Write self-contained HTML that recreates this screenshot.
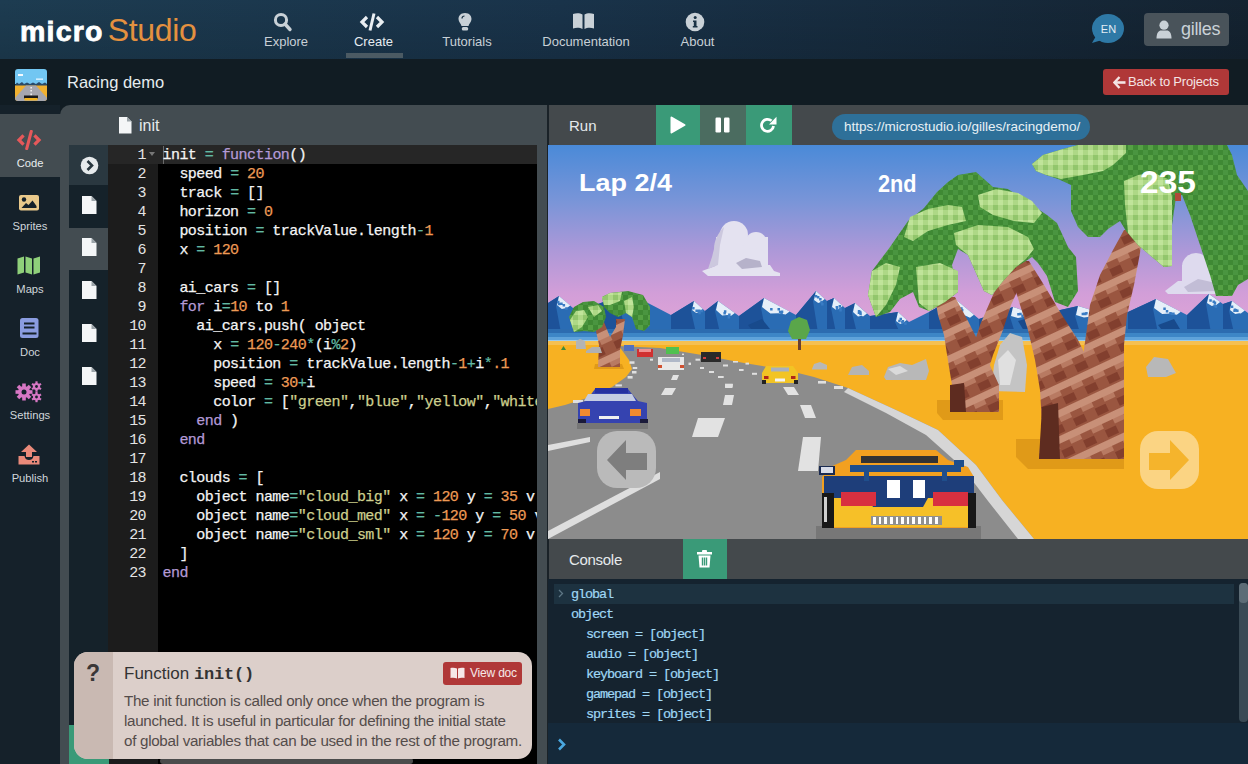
<!DOCTYPE html>
<html><head><meta charset="utf-8">
<style>
*{margin:0;padding:0;box-sizing:border-box}
html,body{width:1248px;height:764px;overflow:hidden;background:#111c23;font-family:"Liberation Sans",sans-serif}
.a{position:absolute}
#hdr{left:0;top:0;width:1248px;height:59px;background:linear-gradient(rgba(0,0,0,0),rgba(0,0,0,0.12)),linear-gradient(to right,#1d3c51,#19334a 45%,#142331)}
.logo{left:20px;top:12px;font-size:32px;color:#fff;white-space:nowrap;letter-spacing:0px}
.logo b{font-weight:bold;font-size:28.5px;letter-spacing:1.2px;-webkit-text-stroke:0.8px #fff}
.logo span{color:#e4913f;letter-spacing:-0.3px;margin-left:4px;font-weight:normal}
.nav{top:34px;font-size:13px;color:#c8d0d6;white-space:nowrap}
#bar{left:0;top:59px;width:1248px;height:46px;background:#111c23}
#side{left:0;top:105px;width:60px;height:659px;background:#15212a}
.sb{left:0;width:60px;text-align:center;font-size:11.2px;color:#d0d6da;margin-top:1px}
#panel{left:60px;top:105px;width:1188px;height:659px;background:#434c51;border-top-left-radius:10px}
.mono{font-family:"Liberation Mono",monospace}
#code{left:158px;top:145px;width:379px;height:619px;background:#000;overflow:hidden}
#gut{left:108px;top:145px;width:50px;height:619px;background:#1c1c1c}
#files{left:69px;top:145px;width:40px;height:619px;background:#15222a}
.ln{position:absolute;left:0;width:38px;text-align:right;font-size:15px;letter-spacing:-0.6px;color:#e4e4e4;line-height:19px;margin-top:0.5px}
.cl{position:absolute;left:4.5px;font-size:15px;letter-spacing:-0.55px;color:#f4f4f4;-webkit-text-stroke:0.25px currentColor;line-height:19px;white-space:pre;margin-top:0.5px}
.o{color:#ee9a55}.e{color:#62b9a3}.k{color:#b49ad6}.s{color:#cdcf8e}
#runp{left:549px;top:105px;width:699px;height:659px;background:#44494c}
#game{left:548px;top:145px;width:700px;height:394px;overflow:hidden;background:#5a90d8}
#cons{left:548px;top:579px;width:700px;height:185px;background:#15232f}
.cline{position:absolute;font-size:13.5px;letter-spacing:-1.1px;color:#9fd7f4;-webkit-text-stroke:0.2px currentColor;white-space:pre;font-family:"Liberation Mono",monospace}
</style></head><body>
<div id="hdr" class="a"></div>
<div class="a logo"><b>micro</b><span>Studio</span></div>
<!-- nav icons -->
<svg class="a" style="left:272px;top:12px" width="22" height="20" viewBox="0 0 22 20"><circle cx="9" cy="8" r="5.6" fill="none" stroke="#c9d1d7" stroke-width="3"/><line x1="13" y1="12" x2="18" y2="17.5" stroke="#c9d1d7" stroke-width="3.4" stroke-linecap="round"/></svg>
<div class="a nav" style="left:264px;width:42px;text-align:center">Explore</div>
<svg class="a" style="left:359px;top:12px" width="26" height="20" viewBox="0 0 26 20"><path d="M8 5 L3 10 L8 15" fill="none" stroke="#e9eef2" stroke-width="3.2"/><path d="M18 5 L23 10 L18 15" fill="none" stroke="#e9eef2" stroke-width="3.2"/><line x1="15" y1="1.5" x2="11" y2="18.5" stroke="#e9eef2" stroke-width="3"/></svg>
<div class="a nav" style="left:350px;width:47px;text-align:center;color:#e6ecf0">Create</div>
<div class="a" style="left:346px;top:53px;width:57px;height:5px;background:#4b5a63"></div>
<svg class="a" style="left:457px;top:12px" width="16" height="20" viewBox="0 0 16 20"><path d="M8 1 C3.5 1 1.5 4 1.5 7 C1.5 10 4 11.5 4.5 14 L11.5 14 C12 11.5 14.5 10 14.5 7 C14.5 4 12.5 1 8 1Z" fill="#c9d1d7"/><rect x="4.8" y="15" width="6.4" height="3.5" rx="1.5" fill="#c9d1d7"/><path d="M5 6.5 C5 5 6 4 7.5 4" stroke="#1a3244" stroke-width="1.2" fill="none"/></svg>
<div class="a nav" style="left:440px;width:54px;text-align:center">Tutorials</div>
<svg class="a" style="left:572px;top:12px" width="23" height="18" viewBox="0 0 23 18"><path d="M1 2 C4 1 8 1 10.5 2.5 L10.5 17 C8 15.5 4 15.5 1 16.5Z" fill="#c9d1d7"/><path d="M22 2 C19 1 15 1 12.5 2.5 L12.5 17 C15 15.5 19 15.5 22 16.5Z" fill="#c9d1d7"/></svg>
<div class="a nav" style="left:540px;width:92px;text-align:center">Documentation</div>
<svg class="a" style="left:685px;top:12px" width="20" height="20" viewBox="0 0 20 20"><circle cx="10" cy="10" r="9.3" fill="#c9d1d7"/><circle cx="10.2" cy="5.6" r="1.5" fill="#1a3244"/><path d="M8 8.5 L11.5 8.5 L11.5 14 L12.5 14 L12.5 15.5 L7.8 15.5 L7.8 14 L8.8 14 L8.8 10 L8 10Z" fill="#1a3244"/></svg>
<div class="a nav" style="left:678px;width:39px;text-align:center">About</div>
<!-- EN bubble -->
<svg class="a" style="left:1088px;top:12px" width="40" height="34" viewBox="0 0 40 34"><ellipse cx="20" cy="16.5" rx="16" ry="14.5" fill="#2e79a6"/><path d="M8 24 L4 31 L14 28Z" fill="#2e79a6"/><text x="20.5" y="21" font-family="Liberation Sans" font-size="11" fill="#e4eef5" text-anchor="middle">EN</text></svg>
<div class="a" style="left:1144px;top:13px;width:85px;height:33px;background:#49535a;border-radius:4px"></div>
<svg class="a" style="left:1155px;top:20px" width="18" height="19" viewBox="0 0 18 19"><circle cx="9" cy="5.2" r="4.6" fill="#c9d1d7"/><path d="M1.5 18.5 C1.5 12.5 4 10.5 6 10.5 L12 10.5 C14 10.5 16.5 12.5 16.5 18.5Z" fill="#c9d1d7"/></svg>
<div class="a" style="left:1181px;top:19px;font-size:18px;color:#c9d1d7;letter-spacing:-0.3px">gilles</div>
<div id="bar" class="a"></div>
<!-- project bar -->
<svg class="a" style="left:15px;top:69px" width="32" height="32" viewBox="0 0 32 32"><defs><clipPath id="tc"><rect width="32" height="32" rx="3"/></clipPath></defs><g clip-path="url(#tc)"><rect width="32" height="15" fill="#72c6f2"/><rect x="3" y="5" width="5" height="2" fill="#f4faff"/><rect x="21" y="9.5" width="7" height="1.3" fill="#e8f6ff"/><path d="M0 16 L2 13.5 L4 15 L7 13 L9 15 L12 13.5 L15 15 L18 13.5 L21 15 L24 13 L27 15 L30 13.5 L32 15 L32 17 L0 17Z" fill="#2a4a68"/><rect y="16.5" width="32" height="15.5" fill="#f0b030"/><path d="M11 16.5 L21 16.5 L32 29 L32 32 L0 32 L0 29Z" fill="#a6a6ae"/><rect x="15.5" y="18" width="1.3" height="1.5" fill="#fff"/><rect x="15.5" y="21" width="1.3" height="1.5" fill="#fff"/><rect x="15.5" y="24.5" width="1.3" height="2" fill="#fff"/><rect x="9" y="26.5" width="14" height="3" fill="#1a1a1a"/><rect x="9.5" y="29" width="13" height="2.5" fill="#f2b21e"/></g></svg>
<div class="a" style="left:67px;top:73px;font-size:16.5px;color:#e6ecef">Racing demo</div>
<div class="a" style="left:1103px;top:69px;width:126px;height:26px;background:#b03838;border-radius:3px"></div>
<svg class="a" style="left:1113px;top:76px" width="13" height="13" viewBox="0 0 13 13"><path d="M6.5 1 L1.5 6.5 L6.5 12" fill="none" stroke="#f4e4e4" stroke-width="2.4"/><line x1="2" y1="6.5" x2="12.5" y2="6.5" stroke="#f4e4e4" stroke-width="2.6"/></svg>
<div class="a" style="left:1128px;top:74px;font-size:13px;color:#f4e4e4;letter-spacing:-0.2px">Back to Projects</div>
<div id="side" class="a"></div>
<div id="panel" class="a"></div>
<div class="a" style="left:0;top:114px;width:62px;height:63px;background:#434c51"></div>
<!-- sidebar icons -->
<svg class="a" style="left:16px;top:130px" width="26" height="20" viewBox="0 0 28 22"><path d="M8 6 L3 11 L8 16" fill="none" stroke="#e6585a" stroke-width="3.6"/><path d="M20 6 L25 11 L20 16" fill="none" stroke="#e6585a" stroke-width="3.6"/><line x1="16.5" y1="1.5" x2="11.5" y2="20.5" stroke="#e6585a" stroke-width="3.4" stroke-linecap="round"/></svg>
<div class="a sb" style="top:156px;color:#e8ecee">Code</div>
<svg class="a" style="left:19px;top:195px" width="20" height="16" viewBox="0 0 20 16"><rect x="0" y="0" width="20" height="15.5" rx="2" fill="#e9c98b"/><circle cx="5" cy="4.5" r="2.2" fill="#15212a"/><path d="M2.5 13 L7 8 L9.5 10 L13.5 5.5 L17.5 11 L17.5 13Z" fill="#15212a"/></svg>
<div class="a sb" style="top:219px">Sprites</div>
<svg class="a" style="left:17px;top:256px" width="24" height="19" viewBox="0 0 24 19"><path d="M0.5 2.5 L7 0.5 L7 16.5 L0.5 18.5Z" fill="#8fd07a"/><path d="M8.5 0.5 L15 2.5 L15 18.5 L8.5 16.5Z" fill="#8fd07a"/><path d="M16.5 2.5 L23 0.5 L23 16.5 L16.5 18.5Z" fill="#8fd07a"/></svg>
<div class="a sb" style="top:282px">Maps</div>
<svg class="a" style="left:20px;top:318px" width="19" height="20" viewBox="0 0 19 20"><rect x="0" y="0" width="18.5" height="20" rx="2.5" fill="#8a9ce0"/><rect x="4" y="4.5" width="10.5" height="2" fill="#15212a"/><rect x="4" y="8.5" width="10.5" height="2" fill="#15212a"/><rect x="2.5" y="14.5" width="14" height="2" fill="#15212a"/></svg>
<div class="a sb" style="top:345px">Doc</div>
<svg class="a" style="left:15px;top:381px" width="28" height="22" viewBox="0 0 28 22">
<g fill="#d777c4"><circle cx="9" cy="11" r="6"/><g transform="translate(9 11)"><rect x="-1.8" y="-8.5" width="3.6" height="17"/><rect x="-1.8" y="-8.5" width="3.6" height="17" transform="rotate(45)"/><rect x="-1.8" y="-8.5" width="3.6" height="17" transform="rotate(90)"/><rect x="-1.8" y="-8.5" width="3.6" height="17" transform="rotate(135)"/></g>
<circle cx="21.5" cy="5.5" r="3.6"/><g transform="translate(21.5 5.5)"><rect x="-1.1" y="-5.2" width="2.2" height="10.4"/><rect x="-1.1" y="-5.2" width="2.2" height="10.4" transform="rotate(60)"/><rect x="-1.1" y="-5.2" width="2.2" height="10.4" transform="rotate(120)"/></g>
<circle cx="21.5" cy="16" r="3.6"/><g transform="translate(21.5 16)"><rect x="-1.1" y="-5.2" width="2.2" height="10.4"/><rect x="-1.1" y="-5.2" width="2.2" height="10.4" transform="rotate(60)"/><rect x="-1.1" y="-5.2" width="2.2" height="10.4" transform="rotate(120)"/></g></g>
<circle cx="9" cy="11" r="2.5" fill="#15212a"/><circle cx="21.5" cy="5.5" r="1.4" fill="#15212a"/><circle cx="21.5" cy="16" r="1.4" fill="#15212a"/></svg>
<div class="a sb" style="top:408px">Settings</div>
<svg class="a" style="left:18px;top:444px" width="22" height="21" viewBox="0 0 22 21"><path d="M11 0.5 L19 8 L14 8 L14 13 L8 13 L8 8 L3 8Z" fill="#ea8a7a"/><path d="M0.5 12 L6.5 12 C7 15 9 16 11 16 C13 16 15 15 15.5 12 L21.5 12 L21.5 20.5 L0.5 20.5Z" fill="#ea8a7a"/><rect x="14" y="17" width="2" height="1.5" fill="#15212a"/><rect x="17" y="17" width="2" height="1.5" fill="#15212a"/></svg>
<div class="a sb" style="top:471px">Publish</div>
<div id="files" class="a"></div>
<div class="a" style="left:69px;top:145px;width:40px;height:40px;background:#2a3840"></div>
<div class="a" style="left:69px;top:228px;width:40px;height:42px;background:#434c51"></div>
<div id="gut" class="a"></div>
<div class="a" style="left:108px;top:145px;width:429px;height:19px;background:#262626"></div>
<div id="code" class="a"></div>
<div class="a" style="left:158px;top:145px;width:379px;height:19px;background:#262626"></div>
<div class="a" style="left:163px;top:146px;width:1px;height:18px;background:#6a6a6a"></div>
<div class="a mono" style="left:108px;top:145px;width:50px;height:619px">
<div class="ln" style="top:0px">1</div>
<div class="ln" style="top:19px">2</div>
<div class="ln" style="top:38px">3</div>
<div class="ln" style="top:57px">4</div>
<div class="ln" style="top:76px">5</div>
<div class="ln" style="top:95px">6</div>
<div class="ln" style="top:114px">7</div>
<div class="ln" style="top:133px">8</div>
<div class="ln" style="top:152px">9</div>
<div class="ln" style="top:171px">10</div>
<div class="ln" style="top:190px">11</div>
<div class="ln" style="top:209px">12</div>
<div class="ln" style="top:228px">13</div>
<div class="ln" style="top:247px">14</div>
<div class="ln" style="top:266px">15</div>
<div class="ln" style="top:285px">16</div>
<div class="ln" style="top:304px">17</div>
<div class="ln" style="top:323px">18</div>
<div class="ln" style="top:342px">19</div>
<div class="ln" style="top:361px">20</div>
<div class="ln" style="top:380px">21</div>
<div class="ln" style="top:399px">22</div>
<div class="ln" style="top:418px">23</div>
</div>
<div class="a mono" style="left:158px;top:145px;width:379px;height:619px;overflow:hidden">
<div class="cl" style="top:0px"><span>init</span> <span class="e">=</span> <span class="k">function</span>()</div>
<div class="cl" style="top:19px">  speed <span class="e">=</span> <span class="o">20</span></div>
<div class="cl" style="top:38px">  track <span class="e">=</span> []</div>
<div class="cl" style="top:57px">  horizon <span class="e">=</span> <span class="o">0</span></div>
<div class="cl" style="top:76px">  position <span class="e">=</span> trackValue.length<span class="e">-</span><span class="o">1</span></div>
<div class="cl" style="top:95px">  x <span class="e">=</span> <span class="o">120</span></div>
<div class="cl" style="top:114px"></div>
<div class="cl" style="top:133px">  ai_cars <span class="e">=</span> []</div>
<div class="cl" style="top:152px">  <span class="k">for</span> i<span class="e">=</span><span class="o">10</span> to <span class="o">1</span></div>
<div class="cl" style="top:171px">    ai_cars.push( object</div>
<div class="cl" style="top:190px">      x <span class="e">=</span> <span class="o">120</span><span class="e">-</span><span class="o">240</span><span class="e">*</span>(i<span class="e">%</span><span class="o">2</span>)</div>
<div class="cl" style="top:209px">      position <span class="e">=</span> trackValue.length<span class="e">-</span><span class="o">1</span><span class="e">+</span>i<span class="e">*</span><span class="o">.1</span></div>
<div class="cl" style="top:228px">      speed <span class="e">=</span> <span class="o">30</span><span class="e">+</span>i</div>
<div class="cl" style="top:247px">      color <span class="e">=</span> [<span class="s">"green"</span>,<span class="s">"blue"</span>,<span class="s">"yellow"</span>,<span class="s">"white"</span>,<span class="s">"red"</span>][i%5]</div>
<div class="cl" style="top:266px">    <span class="k">end</span> )</div>
<div class="cl" style="top:285px">  <span class="k">end</span></div>
<div class="cl" style="top:304px"></div>
<div class="cl" style="top:323px">  clouds <span class="e">=</span> [</div>
<div class="cl" style="top:342px">    object name<span class="e">=</span><span class="s">"cloud_big"</span> x <span class="e">=</span> <span class="o">120</span> y <span class="e">=</span> <span class="o">35</span> v</div>
<div class="cl" style="top:361px">    object name<span class="e">=</span><span class="s">"cloud_med"</span> x <span class="e">=</span> <span class="e">-</span><span class="o">120</span> y <span class="e">=</span> <span class="o">50</span> vx</div>
<div class="cl" style="top:380px">    object name<span class="e">=</span><span class="s">"cloud_sml"</span> x <span class="e">=</span> <span class="o">120</span> y <span class="e">=</span> <span class="o">70</span> v</div>
<div class="cl" style="top:399px">  ]</div>
<div class="cl" style="top:418px"><span class="k">end</span></div>
</div><svg class="a" style="left:119px;top:117px" width="13" height="17" viewBox="0 0 13 17"><path d="M0 0 L8 0 L12.5 4.5 L12.5 16.5 L0 16.5Z" fill="#f4f6f7"/><path d="M8 0 L8 4.5 L12.5 4.5" fill="#9aa3a8"/></svg>
<div class="a" style="left:139px;top:117px;font-size:16px;color:#e6eaec">init</div>
<svg class="a" style="left:80px;top:156px" width="19" height="19" viewBox="0 0 19 19"><circle cx="9.5" cy="9.5" r="8.8" fill="#e6eaec"/><path d="M7.5 5 L12 9.5 L7.5 14" fill="none" stroke="#28363e" stroke-width="2.6"/></svg>
<svg class="a" style="left:82px;top:196px" width="15" height="18" viewBox="0 0 15 18"><path d="M0 0 L9.5 0 L14.5 5 L14.5 18 L0 18Z" fill="#f4f6f7"/><path d="M9.5 0 L9.5 5 L14.5 5" fill="#9aa3a8"/></svg>
<svg class="a" style="left:82px;top:238px" width="15" height="18" viewBox="0 0 15 18"><path d="M0 0 L9.5 0 L14.5 5 L14.5 18 L0 18Z" fill="#f4f6f7"/><path d="M9.5 0 L9.5 5 L14.5 5" fill="#9aa3a8"/></svg>
<svg class="a" style="left:82px;top:281px" width="15" height="18" viewBox="0 0 15 18"><path d="M0 0 L9.5 0 L14.5 5 L14.5 18 L0 18Z" fill="#f4f6f7"/><path d="M9.5 0 L9.5 5 L14.5 5" fill="#9aa3a8"/></svg>
<svg class="a" style="left:82px;top:324px" width="15" height="18" viewBox="0 0 15 18"><path d="M0 0 L9.5 0 L14.5 5 L14.5 18 L0 18Z" fill="#f4f6f7"/><path d="M9.5 0 L9.5 5 L14.5 5" fill="#9aa3a8"/></svg>
<svg class="a" style="left:82px;top:367px" width="15" height="18" viewBox="0 0 15 18"><path d="M0 0 L9.5 0 L14.5 5 L14.5 18 L0 18Z" fill="#f4f6f7"/><path d="M9.5 0 L9.5 5 L14.5 5" fill="#9aa3a8"/></svg>
<svg class="a" style="left:149px;top:152px" width="7" height="5" viewBox="0 0 7 5"><path d="M0 0 L6 0 L3 4Z" fill="#777"/></svg>
<div class="a" style="left:69px;top:725px;width:40px;height:39px;background:#3a9a78"></div>
<!-- run panel -->
<div id="runp" class="a"></div>
<div class="a" style="left:547px;top:105px;width:2px;height:659px;background:#1a2228"></div>
<div class="a" style="left:569px;top:117px;font-size:15px;color:#e6eaec">Run</div>
<!--GAME-->
<svg class="a" style="left:548px;top:145px" width="700" height="394" viewBox="0 0 700 394">
<defs>
<linearGradient id="sky" x1="0" y1="0" x2="0" y2="190" gradientUnits="userSpaceOnUse"><stop offset="0" stop-color="#4a8ad8"/><stop offset="0.3" stop-color="#7a95d8"/><stop offset="0.55" stop-color="#ac98d8"/><stop offset="0.78" stop-color="#d29ed8"/><stop offset="1" stop-color="#e2a6d6"/></linearGradient>
<linearGradient id="wat" x1="0" y1="0" x2="0" y2="1">
<stop offset="0" stop-color="#2f78c0"/><stop offset="0.6" stop-color="#4d9ad5"/><stop offset="1" stop-color="#a8d8ee"/>
</linearGradient>
<pattern id="pd" width="10" height="10" patternUnits="userSpaceOnUse"><rect width="10" height="10" fill="#3f8934"/><rect x="0" y="0" width="5" height="5" fill="#55a044"/><rect x="5" y="5" width="5" height="5" fill="#4a9540"/></pattern>
<pattern id="pl" width="10" height="10" patternUnits="userSpaceOnUse"><rect width="10" height="10" fill="#aed886"/><rect x="5" y="0" width="5" height="5" fill="#92c66c"/><rect x="0" y="5" width="5" height="5" fill="#c0e49a"/></pattern>
<pattern id="pt" width="24" height="24" patternUnits="userSpaceOnUse" patternTransform="rotate(-25)"><rect width="24" height="24" fill="#9a5640"/><rect x="0" y="0" width="24" height="7" fill="#c89078"/><rect x="12" y="7" width="12" height="5" fill="#b87a62"/><rect x="0" y="14" width="12" height="8" fill="#823f2e"/></pattern>
</defs>
<rect width="700" height="200" fill="url(#sky)"/>
<!-- cloud big -->
<g fill="#e4e2f0"><rect x="168" y="92" width="52" height="34"/><circle cx="186" cy="90" r="14"/><circle cx="208" cy="98" r="11"/><circle cx="180" cy="112" r="15"/><circle cx="206" cy="116" r="13"/><path d="M154 126 L170 120 L222 120 L226 126 L232 128 L232 131 L160 131Z"/></g>
<path d="M188 118 L198 113 L212 116 L214 122 L194 124Z" fill="#b6b2ca"/>
<path d="M166 104 C166 96 170 88 176 82 L172 100 L170 120 L160 124 L164 112Z" fill="#ccc8de"/>
<!-- cloud small right -->
<g fill="#dedaee"><rect x="634" y="120" width="36" height="20"/><circle cx="648" cy="122" r="14"/><circle cx="664" cy="130" r="11"/><path d="M617 146 L630 136 L676 136 L679 149 L620 149Z"/></g>
<path d="M636 142 L650 134 L668 138 L668 146 L640 147Z" fill="#c2bdd6"/>
<!-- mountains -->
<path d="M0 188 L0 158 L11 151 L25 163 L50 159 L75 150 L100 158 L123 170 L146 156 L157 166 L170 156 L191 171 L216 153 L248 170 L268 146 L279 156 L286 153 L297 163 L307 158 L322 171 L350 167 L361 177 L381 167 L406 153 L431 174 L465 162 L490 170 L530 161 L560 170 L580 167 L608 154 L639 170 L661 149 L675 159 L684 156 L700 168 L700 188 Z" fill="#2a6cb4"/>
<path d="M0 158 L11 151 L8 161 L13 188 L0 188Z M50 159 L75 150 L72 160 L77 188 L50 188Z M123 170 L146 156 L143 166 L148 188 L123 188Z M157 166 L170 156 L167 166 L172 188 L157 188Z M191 171 L216 153 L213 163 L218 188 L191 188Z M248 170 L268 146 L265 156 L270 188 L248 188Z M279 156 L286 153 L283 163 L288 188 L279 188Z M297 163 L307 158 L304 168 L309 188 L297 188Z M322 171 L350 167 L347 177 L352 188 L322 188Z M381 167 L406 153 L403 163 L408 188 L381 188Z M431 174 L465 162 L462 172 L467 188 L431 188Z M490 170 L530 161 L527 171 L532 188 L490 188Z M580 167 L608 154 L605 164 L610 188 L580 188Z M639 170 L661 149 L658 159 L663 188 L639 188Z M675 159 L684 156 L681 166 L686 188 L675 188Z" fill="#1d5299"/>
<path d="M11 151 L22.2 160.6 L18.2 163.6 L17.3 163.2 L13.8 164.0 L9 160Z M75 150 L95.0 156.4 L91.0 159.4 L86.2 159.8 L80.0 161.0 L73 159Z M146 156 L154.8 164.0 L150.8 167.0 L150.9 167.0 L148.2 168.0 L144 165Z M170 156 L186.8 168.0 L182.8 171.0 L179.4 170.0 L174.2 170.5 L168 165Z M216 153 L241.6 166.6 L237.6 169.6 L230.4 168.2 L222.4 168.5 L214 162Z M268 146 L276.8 154.0 L272.8 157.0 L272.9 157.0 L270.2 158.0 L266 155Z M286 153 L294.8 161.0 L290.8 164.0 L290.9 164.0 L288.2 165.0 L284 162Z M307 158 L319.0 168.4 L315.0 171.4 L313.8 170.8 L310.0 171.5 L305 167Z M350 167 L358.8 175.0 L354.8 178.0 L354.9 178.0 L352.2 179.0 L348 176Z M406 153 L426.0 169.8 L422.0 172.8 L417.2 170.6 L411.0 170.5 L404 162Z M465 162 L485.0 168.4 L481.0 171.4 L476.2 171.8 L470.0 173.0 L463 171Z M530 161 L554.0 168.2 L550.0 171.2 L543.5 171.4 L536.0 172.5 L528 170Z M608 154 L632.8 166.8 L628.8 169.8 L622.0 168.6 L614.2 169.0 L606 163Z M661 149 L672.2 157.0 L668.2 160.0 L667.3 160.0 L663.8 161.0 L659 158Z M684 156 L696.8 165.6 L692.8 168.6 L691.2 168.2 L687.2 169.0 L682 165Z" fill="#e6eff9"/>
<path d="M12.2 157.5h2.5v2.5h-2.5Z M14.6 159.0h2.5v2.5h-2.5Z M9.0 155.7h2.5v2.5h-2.5Z M9.9 157.8h2.5v2.5h-2.5Z M17.2 162.2h2.5v2.5h-2.5Z M77.6 156.5h2.5v2.5h-2.5Z M82.2 157.5h2.5v2.5h-2.5Z M75.8 155.3h2.5v2.5h-2.5Z M82.7 157.1h2.5v2.5h-2.5Z M81.7 157.9h2.5v2.5h-2.5Z M147.4 164.6h2.5v2.5h-2.5Z M150.3 166.7h2.5v2.5h-2.5Z M152.5 164.7h2.5v2.5h-2.5Z M144.1 162.0h2.5v2.5h-2.5Z M149.9 164.5h2.5v2.5h-2.5Z M175.9 165.2h2.5v2.5h-2.5Z M175.4 167.1h2.5v2.5h-2.5Z M179.6 170.9h2.5v2.5h-2.5Z M180.1 168.4h2.5v2.5h-2.5Z M179.8 169.9h2.5v2.5h-2.5Z M232.3 166.7h2.5v2.5h-2.5Z M229.5 163.1h2.5v2.5h-2.5Z M230.9 165.8h2.5v2.5h-2.5Z M232.8 165.5h2.5v2.5h-2.5Z M222.1 162.9h2.5v2.5h-2.5Z M266.8 149.9h2.5v2.5h-2.5Z M272.3 156.1h2.5v2.5h-2.5Z M273.1 157.9h2.5v2.5h-2.5Z M271.1 153.0h2.5v2.5h-2.5Z M268.9 150.9h2.5v2.5h-2.5Z M290.6 160.0h2.5v2.5h-2.5Z M291.3 164.1h2.5v2.5h-2.5Z M291.2 162.8h2.5v2.5h-2.5Z M287.6 161.1h2.5v2.5h-2.5Z M287.9 162.4h2.5v2.5h-2.5Z M311.3 167.7h2.5v2.5h-2.5Z M309.7 166.6h2.5v2.5h-2.5Z M310.8 165.7h2.5v2.5h-2.5Z M309.8 165.0h2.5v2.5h-2.5Z M311.2 166.5h2.5v2.5h-2.5Z M353.1 176.0h2.5v2.5h-2.5Z M350.2 174.7h2.5v2.5h-2.5Z M351.5 172.7h2.5v2.5h-2.5Z M356.2 177.2h2.5v2.5h-2.5Z M353.6 174.9h2.5v2.5h-2.5Z M412.2 163.5h2.5v2.5h-2.5Z M412.0 163.9h2.5v2.5h-2.5Z M407.3 160.7h2.5v2.5h-2.5Z M412.9 164.1h2.5v2.5h-2.5Z M412.1 162.2h2.5v2.5h-2.5Z M477.8 169.2h2.5v2.5h-2.5Z M469.2 168.0h2.5v2.5h-2.5Z M479.7 170.0h2.5v2.5h-2.5Z M473.3 169.4h2.5v2.5h-2.5Z M471.2 167.8h2.5v2.5h-2.5Z M533.6 167.8h2.5v2.5h-2.5Z M536.1 167.7h2.5v2.5h-2.5Z M541.1 168.6h2.5v2.5h-2.5Z M535.2 167.4h2.5v2.5h-2.5Z M537.2 166.9h2.5v2.5h-2.5Z M617.8 164.9h2.5v2.5h-2.5Z M615.3 162.6h2.5v2.5h-2.5Z M622.7 167.4h2.5v2.5h-2.5Z M624.2 167.4h2.5v2.5h-2.5Z M621.2 166.9h2.5v2.5h-2.5Z M665.7 156.4h2.5v2.5h-2.5Z M664.5 155.5h2.5v2.5h-2.5Z M661.3 154.2h2.5v2.5h-2.5Z M666.6 160.2h2.5v2.5h-2.5Z M665.5 159.2h2.5v2.5h-2.5Z M682.8 160.4h2.5v2.5h-2.5Z M685.7 163.4h2.5v2.5h-2.5Z M685.3 164.4h2.5v2.5h-2.5Z M688.1 164.6h2.5v2.5h-2.5Z M686.7 164.0h2.5v2.5h-2.5Z" fill="#3a7cc4"/>
<g fill="#184a8c"><path d="M30 178 L44 172 L50 182 L36 186Z"/><path d="M200 180 L214 174 L222 184 L206 188Z"/><path d="M470 176 L484 172 L490 182 L476 186Z"/><path d="M610 180 L626 174 L632 184 L616 188Z"/></g>
<rect y="184" width="700" height="4" fill="#2c6cb0"/><rect y="188" width="700" height="4" fill="#3d86c6"/><rect y="192" width="700" height="3" fill="#5fa3da"/><rect y="195" width="700" height="2" fill="#9ccdee"/>
<!-- sand -->
<rect y="196" width="700" height="198" fill="#f7b122"/>
<rect y="196" width="700" height="4" fill="#f6c050"/>
<!-- road -->
<path d="M0 264 L17 260 L42 252 L64 242 L78 232 L84 224 L81 215 L71 201 L112 203 L154 210 L196 218 L238 225 L266 232 L300 243 L348 265 L390 285 L428 320 L454 355 L486 394 L0 394Z" fill="#8c8c8c"/>
<!-- road edge lines -->
<path d="M300 243 L348 265 L390 285 L428 320 L454 355 L486 394 L470 394 L440 356 L414 322 L378 290 L338 268 L296 247Z" fill="#d6d6d6"/>
<path d="M0 386 L112 327 L112 334 L0 394Z" fill="#dedede"/>
<path d="M0 300 L42 292 L42 297 L0 306Z" fill="#dedede"/>
<!-- lane dashes -->
<g fill="#e0e0e0"><rect x="81.5" y="216.3" width="5" height="2.5"/><rect x="84.7" y="222" width="4.5" height="2"/><rect x="84" y="226" width="4.5" height="2.5"/><rect x="79.6" y="231" width="5" height="2.6"/><rect x="67.4" y="239.4" width="6.5" height="2"/><rect x="50" y="246" width="8" height="2.5"/><rect x="25" y="255" width="10" height="3"/><rect x="102" y="213.7" width="3" height="2"/><rect x="140.5" y="217.6" width="2.5" height="2.4"/><rect x="152" y="222" width="4" height="2"/><rect x="161" y="226" width="5" height="2"/><rect x="170" y="231" width="5.7" height="2"/><rect x="177" y="238.7" width="7.7" height="3.9"/><rect x="147.5" y="213.7" width="4.5" height="2"/><rect x="175" y="219.5" width="5" height="2"/><rect x="191" y="224" width="4.6" height="2"/><rect x="204" y="227.8" width="5" height="2"/><rect x="185" y="216" width="5" height="1.6"/><rect x="197.5" y="217.6" width="3.5" height="2"/><rect x="134" y="208.6" width="2" height="1.5"/><rect x="220" y="231" width="6" height="2.4"/><rect x="270" y="236" width="8" height="2.6"/><rect x="286" y="241" width="9" height="3"/></g>

<g fill="#e2e2e2">
<path d="M150 273 L177 273 L170 292 L144 292Z"/><path d="M255 292 L273 292 L270 326 L250 326Z"/><path d="M117 243 L128 243 L124 250 L113 250Z"/><path d="M252 260 L263 260 L268 273 L257 273Z"/><path d="M177 250 L186 250 L184 260 L175 260Z"/><path d="M235 242 L246 242 L251 250 L240 250Z"/><path d="M178 239 L185 239 L184 243 L177 243Z"/><path d="M125 230 L131 230 L129 235 L123 235Z"/>
</g>
<!-- left arrow -->
<rect x="49" y="286" width="59" height="57" rx="20" fill="#bababa"/><path d="M59 315 L78 295 L78 308 L99 308 L99 325 L78 325 L78 335Z" fill="#7e7e7e"/>
<!-- right arrow -->
<rect x="592" y="286" width="59" height="58" rx="18" fill="#fbd483"/><path d="M641 315 L622 295 L622 308 L601 308 L601 325 L622 325 L622 335Z" fill="#f5b42c"/>
<!-- left small palm -->
<path d="M47 219 L74 219 L76 224 L46 224Z" fill="#e09a18"/>
<path d="M46 177 L56 177 L62 192 L68 182 L68 174 L77 174 L75 190 L72 205 L72 222 L50 222 L51 200Z" fill="url(#pt)"/>
<path d="M21 172 L26 162 L35 157 L46 156 L56 162 L58 172 L54 182 L46 187 L36 186 L26 187Z" fill="url(#pd)"/>
<path d="M22 175 L28 166 L36 165 L40 172 L34 182 L26 187Z" fill="url(#pl)"/>
<path d="M40 162 L50 160 L54 166 L46 172Z" fill="url(#pl)"/>
<path d="M54 152 L62 148 L80 146 L95 150 L102 162 L102 180 L96 186 L88 184 L84 172 L78 168 L70 172 L62 168 L56 162Z" fill="url(#pd)"/>
<path d="M54 152 L62 148 L74 147 L72 156 L62 160 L56 160Z" fill="url(#pl)"/>
<path d="M76 156 L84 152 L86 162 L84 172 L78 168Z" fill="url(#pl)"/>
<path d="M28 196 L32 194 L37 196 L38 204 L28 204Z" fill="#b4b4b4"/>
<path d="M38 206 L44 202 L52 202 L54 208 L38 208Z" fill="#b0b0b0"/>
<path d="M13 205 L15.5 201 L18 205Z" fill="#3f8a3a"/>
<!-- small tree -->
<path d="M250 190 L253 190 L253 205 L250 205Z" fill="#6a4030"/>
<path d="M240 186 L243 176 L251 172 L259 175 L262 185 L258 194 L244 194Z" fill="#5aa64a"/>
<!-- rocks -->
<path d="M264 224 L266 219 L272 217 L279 220 L279 224.5 L264 224.5Z" fill="#b8b8b8"/>
<path d="M300 230 L304 222 L314 220 L321 226 L321 230Z" fill="#b4b4b4"/>
<path d="M336 232 L340 222 L352 218 L364 220 L378 214 L381 226 L378 235 L338 235Z" fill="#b8b8b8"/>
<path d="M340 224 L352 221 L360 226 L348 230Z" fill="#dadada"/>
<path d="M443 246 L446 220 L452 200 L462 188 L474 192 L479 220 L477 247Z" fill="#c4c4c4"/>
<path d="M450 215 L460 205 L468 215 L462 240 L452 240Z" fill="#e0e0e0"/>
<path d="M598 222 L606 212 L620 214 L628 228 L618 232 L600 232Z" fill="#b8b8b8"/>
<!-- middle tree shadow -->
<path d="M389 255 L455 255 L455 275 L395 275 L389 268Z" fill="#e09a18"/>
<!-- middle tree trunks -->
<path d="M387 152 L407 152 L420 176 L432 200 L440 216 L451 240 L451 267 L402 267 L404 240 L400 216 L396 190 L390 170Z" fill="url(#pt)"/>
<path d="M458 117 L476 117 L472 140 L463 160 L455 185 L445 210 L436 240 L418 238 L424 205 L432 180 L445 150 L452 135Z" fill="url(#pt)"/>
<path d="M402 240 L416 238 L418 267 L402 267Z" fill="#5e2c20"/>
<!-- big tree shadow -->
<path d="M468 294 L576 294 L576 324 L480 324 L468 312Z" fill="#e09a18"/>
<!-- big tree trunks -->
<path d="M461 116 L481 116 L496 140 L514 170 L530 195 L545 225 L576 240 L576 314 L491 314 L494 280 L492 245 L487 215 L480 185 L472 160 L465 137Z" fill="url(#pt)"/>
<path d="M576 85 L595 85 L592 108 L586 140 L579 170 L576 200 L576 245 L540 250 L533 225 L538 190 L542 160 L552 130 L565 105Z" fill="url(#pt)"/>
<path d="M494 262 L510 258 L512 314 L491 314Z" fill="#5e2c20"/>

<!-- middle canopy -->
<path d="M410 30 L428 27 L445 42 L460 44 L478 56 L499 70 L509 78 L520 102 L528 112 L530 146 L520 162 L507 157 L499 131 L490 118 L484 112 L478 116 L468 122 L455 136 L444 150 L436 146 L428 128 L420 110 L410 104 L404 120 L410 147 L397 157 L381 166 L371 162 L365 147 L352 154 L342 167 L328 172 L320 150 L324 126 L342 102 L360 76 L376 63 L389 47 L400 37Z" fill="url(#pd)"/>
<path d="M356 92 L362 72 L380 64 L400 60 L414 62 L418 76 L400 80 L380 86 L365 96Z" fill="url(#pl)"/>
<path d="M430 50 L448 44 L470 48 L484 56 L494 68 L486 78 L466 76 L445 70 L432 62Z" fill="url(#pl)"/>
<path d="M406 88 L430 80 L460 82 L480 92 L486 104 L478 114 L468 122 L455 136 L444 150 L436 146 L428 128 L420 110 L408 100Z" fill="url(#pl)"/>
<path d="M320 150 L324 126 L338 118 L352 122 L348 140 L338 160 L328 172Z" fill="url(#pl)"/>
<path d="M368 122 L392 118 L410 126 L410 147 L397 157 L381 166 L371 158Z" fill="url(#pl)"/>
<!-- big canopy -->
<path d="M484 19 L495 10 L515 4 L530 0 L679 0 L684 10 L689 30 L700 46 L700 134 L690 140 L684 151 L668 151 L662 130 L652 100 L642 70 L634 50 L628 52 L624 80 L624 121 L616 122 L604 112 L590 100 L578 86 L572 76 L560 84 L552 92 L540 92 L530 82 L523 66 L523 40 L510 34 L498 30 L488 26Z" fill="url(#pd)"/>
<path d="M484 19 L495 10 L515 4 L530 0 L578 0 L578 8 L565 20 L555 26 L535 30 L513 34 L498 30 L488 26Z" fill="url(#pl)"/>
<path d="M576 36 L590 30 L606 28 L620 34 L624 52 L624 121 L616 122 L604 112 L590 100 L580 88 L577 60Z" fill="url(#pl)"/>
<rect x="627" y="48" width="6" height="8" fill="#b04a3a"/>

<!-- distant cars -->
<rect x="89" y="204" width="16" height="8" fill="#d03030"/><rect x="91" y="204" width="12" height="3" fill="#f09090"/>
<rect x="110" y="212" width="26" height="13" fill="#e8e8e8"/><rect x="114" y="213" width="18" height="4" fill="#b0b8c8"/><rect x="110" y="220" width="4" height="3" fill="#d05030"/><rect x="132" y="220" width="4" height="3" fill="#d05030"/>
<rect x="153" y="207" width="20" height="10" fill="#2a2a2a"/><rect x="155" y="212" width="3" height="2" fill="#d04040"/><rect x="168" y="212" width="3" height="2" fill="#d04040"/>
<rect x="118" y="202" width="13" height="7" fill="#50c050"/>
<rect x="76" y="200" width="10" height="6" fill="#5070c0"/>
<path d="M218 221 L245 221 L250 228 L250 238 L214 238 L214 228Z" fill="#f2c424"/><rect x="223" y="222.5" width="18" height="4" fill="#a8b0c0"/><rect x="216" y="231" width="4.5" height="3" fill="#b02818"/><rect x="243" y="231" width="4.5" height="3" fill="#b02818"/><rect x="227" y="233.5" width="10" height="3" fill="#f4f4f4"/><rect x="214" y="235" width="4" height="4" fill="#222"/><rect x="246" y="235" width="4" height="4" fill="#222"/>
<!-- blue car -->
<rect x="29" y="278" width="71" height="6" fill="#767676"/>
<path d="M47 244 L80 244 L84 249 L90 256 L99 258 L99 278 L30 278 L30 258 L38 256Z" fill="#3543b0"/>
<path d="M40 249 L84 249 L88 256 L36 256Z" fill="#c4cce2"/>
<rect x="47" y="243" width="33" height="5" fill="#2530a0"/>
<rect x="32" y="264" width="10" height="7" fill="#f08a30"/><rect x="82" y="264" width="11" height="7" fill="#f08a30"/>
<rect x="51" y="271" width="20" height="3" fill="#f0f0f0"/>
<rect x="30" y="274" width="8" height="4" fill="#1a1a3a"/><rect x="92" y="274" width="8" height="4" fill="#1a1a3a"/>
<!-- player car -->
<rect x="268" y="381" width="165" height="13" fill="#777"/>
<path d="M308 305 L388 305 L400 315 L420 322 L426 332 L426 383 L274 383 L274 332 L282 322 L298 315Z" fill="#f2a020"/>
<rect x="313" y="311" width="77" height="7" fill="#333"/>
<rect x="276" y="331" width="150" height="32" fill="#1e3e7a"/>
<rect x="302" y="320" width="111" height="7" fill="#1f4e8c"/><rect x="316" y="327" width="5" height="9" fill="#1f4e8c"/><rect x="394" y="327" width="5" height="9" fill="#1f4e8c"/>
<rect x="286" y="353" width="138" height="29" fill="#f6c028"/>
<path d="M320 353 L380 353 L375 362 L325 362Z" fill="#1e3e7a"/>
<rect x="339" y="335" width="13" height="18" fill="#fff"/><rect x="365" y="335" width="12" height="18" fill="#fff"/>
<rect x="293" y="347" width="35" height="14" fill="#d83040"/><rect x="385" y="347" width="35" height="14" fill="#d83040"/>
<rect x="323" y="371" width="71" height="9" fill="#909090"/>
<g fill="#fff"><rect x="325" y="372" width="3" height="7"/><rect x="331" y="372" width="2" height="7"/><rect x="336" y="372" width="3" height="7"/><rect x="342" y="372" width="3" height="7"/><rect x="348" y="372" width="2" height="7"/><rect x="353" y="372" width="3" height="7"/><rect x="359" y="372" width="2" height="7"/><rect x="364" y="372" width="3" height="7"/><rect x="370" y="372" width="3" height="7"/><rect x="376" y="372" width="2" height="7"/><rect x="381" y="372" width="3" height="7"/><rect x="387" y="372" width="3" height="7"/></g>
<rect x="274" y="348" width="12" height="35" fill="#181818"/><rect x="420" y="348" width="8" height="35" fill="#181818"/>
<rect x="276" y="352" width="3" height="25" fill="#d0d0d0"/>
<rect x="271" y="321" width="16" height="9" fill="#1a2a50"/><rect x="273" y="322" width="12" height="6" fill="#d8dce8"/>
<rect x="406" y="315" width="10" height="7" fill="#1f4e8c"/>

<!-- HUD -->
<text x="31" y="46" font-family="Liberation Sans" font-weight="bold" font-size="23.5" fill="#fff" textLength="93" lengthAdjust="spacingAndGlyphs">Lap 2/4</text>
<text x="330" y="46.5" font-family="Liberation Sans" font-weight="bold" font-size="24" fill="#fff" textLength="38.5" lengthAdjust="spacingAndGlyphs">2nd</text>
<text x="592" y="48.4" font-family="Liberation Sans" font-weight="bold" font-size="32" fill="#fff" textLength="56" lengthAdjust="spacingAndGlyphs">235</text>
</svg>

<!--/GAME-->
<div class="a" style="left:656px;top:105px;width:44px;height:40px;background:#3a9a78"></div>
<div class="a" style="left:700px;top:105px;width:46px;height:40px;background:#4b6c60"></div>
<div class="a" style="left:746px;top:105px;width:46px;height:40px;background:#3a9a78"></div>
<svg class="a" style="left:670px;top:116px" width="16" height="18" viewBox="0 0 16 18"><path d="M1.5 1.5 L14.5 9 L1.5 16.5Z" fill="#fff" stroke="#fff" stroke-width="2" stroke-linejoin="round"/></svg>
<svg class="a" style="left:715px;top:117px" width="16" height="16" viewBox="0 0 16 16"><rect x="0.5" y="0.5" width="5.5" height="15" rx="1.2" fill="#fff"/><rect x="9" y="0.5" width="5.5" height="15" rx="1.2" fill="#fff"/></svg>
<svg class="a" style="left:759px;top:116px" width="19" height="18" viewBox="0 0 19 18"><path d="M14.5 10 A6 6 0 1 1 12.5 4.8" fill="none" stroke="#fff" stroke-width="2.8"/><path d="M17.5 0.8 L17.5 8.5 L10 8.5Z" fill="#fff"/></svg>
<div class="a" style="left:832px;top:114px;width:258px;height:26px;background:#2e7099;border-radius:13px"></div>
<div class="a" style="left:844px;top:119px;font-size:13.5px;color:#e8f0f5;letter-spacing:0px">https://microstudio.io/gilles/racingdemo/</div>
<!-- console -->
<div class="a" style="left:569px;top:551px;font-size:15px;letter-spacing:-0.3px;color:#e6eaec">Console</div>
<div class="a" style="left:683px;top:539px;width:44px;height:40px;background:#3a9a78"></div>
<svg class="a" style="left:696px;top:550px" width="17" height="18" viewBox="0 0 17 18"><rect x="1" y="2" width="15" height="2.5" fill="#fff"/><rect x="6" y="0" width="5" height="2.5" rx="1" fill="#fff"/><path d="M2.5 5.5 L14.5 5.5 L13.5 17.5 L3.5 17.5Z" fill="#fff"/><rect x="5.8" y="7.5" width="1.4" height="8" fill="#3a9a78"/><rect x="7.8" y="7.5" width="1.4" height="8" fill="#3a9a78"/><rect x="9.8" y="7.5" width="1.4" height="8" fill="#3a9a78"/></svg>
<div id="cons" class="a"></div>
<div class="a" style="left:554px;top:584px;width:680px;height:20px;background:#1d3240"></div>
<svg class="a" style="left:558px;top:589px" width="6" height="9" viewBox="0 0 6 9"><path d="M1 1 L4.5 4.5 L1 8" fill="none" stroke="#5d7684" stroke-width="1.3"/></svg>
<div class="cline" style="left:571px;top:587px">global</div>
<div class="cline" style="left:571px;top:607px">object</div>
<div class="cline" style="left:586px;top:627px">screen = [object]</div>
<div class="cline" style="left:586px;top:647px">audio = [object]</div>
<div class="cline" style="left:586px;top:667px">keyboard = [object]</div>
<div class="cline" style="left:586px;top:687px">gamepad = [object]</div>
<div class="cline" style="left:586px;top:707px">sprites = [object]</div>
<div class="a" style="left:1239px;top:583px;width:9px;height:139px;background:#3a4a55;border-radius:4px"></div><div class="a" style="left:1239px;top:583px;width:9px;height:20px;background:#5d6c76;border-radius:4px"></div>
<div class="a" style="left:548px;top:723px;width:700px;height:41px;background:#15293a"></div>
<svg class="a" style="left:557px;top:738px" width="10" height="13" viewBox="0 0 10 13"><path d="M2 1.5 L7 6.5 L2 11.5" fill="none" stroke="#4aa8e0" stroke-width="2.6"/></svg>
<div class="a" style="left:160px;top:758px;width:253px;height:6px;background:#4c4c4c;border-radius:3px"></div>
<!-- popup -->
<div class="a" style="left:74px;top:652px;width:458px;height:107px;background:#dccfca;border-radius:14px;overflow:hidden"><div style="position:absolute;left:0;top:0;width:39px;height:107px;background:#c9b9b2"></div></div>
<div class="a" style="left:86px;top:660px;font-size:23px;font-weight:bold;color:#3a3636">?</div>
<div class="a" style="left:124px;top:664px;font-size:17px;color:#333">Function <b class="mono" style="font-size:17px;letter-spacing:-0.2px">init()</b></div>
<div class="a" style="left:443px;top:662px;width:79px;height:23px;background:#b03838;border-radius:3px"></div>
<svg class="a" style="left:450px;top:667px" width="15" height="12" viewBox="0 0 15 12"><path d="M0.5 1 C2.5 0.5 5 0.5 7 1.5 L7 11.5 C5 10.5 2.5 10.5 0.5 11Z" fill="#f6e8e8"/><path d="M14.5 1 C12.5 0.5 10 0.5 8 1.5 L8 11.5 C10 10.5 12.5 10.5 14.5 11Z" fill="#f6e8e8"/></svg>
<div class="a" style="left:470px;top:666px;font-size:12px;color:#f6e8e8;letter-spacing:-0.2px">View doc</div>
<div class="a" style="left:124px;top:691px;width:402px;font-size:15.2px;line-height:20px;color:#544c4a;letter-spacing:-0.3px"><div style="white-space:nowrap">The init function is called only once when the program is<br>launched. It is useful in particular for defining the initial state<br>of global variables that can be used in the rest of the program.</div></div>

</body></html>
